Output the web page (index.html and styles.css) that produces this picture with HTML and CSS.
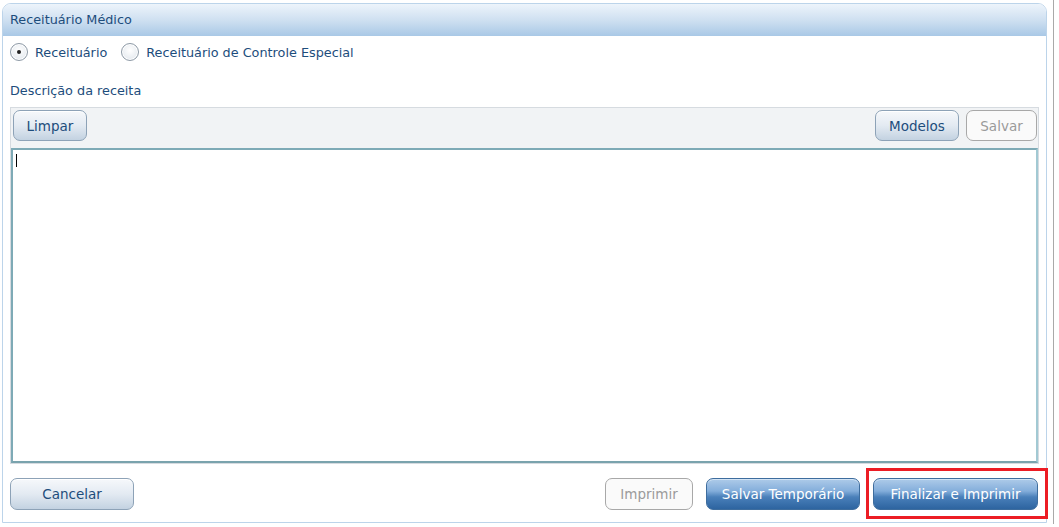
FILE: index.html
```html
<!doctype html>
<html lang="pt-BR">
<head>
	<meta charset="UTF-8">
	<title>Receituário Médico</title>
	<link rel="stylesheet" href="styles.css">
</head>
<body>
	<div class="page">
		<div class="panel">
			<div class="panel-head">Receituário Médico</div>
			<div class="panel-body">
				<div class="tipos">
					<label class="radio"><span class="dot checked"></span>Receituário</label>
					<label class="radio"><span class="dot"></span>Receituário de Controle Especial</label>
				</div>
				<div class="rotulo">Descrição da receita</div>
				<div class="editor">
					<div class="toolbar">
						<button class="btn b-limpar">Limpar</button>
						<span class="espaco"></span>
						<button class="btn b-modelos">Modelos</button>
						<button class="btn off b-salvar">Salvar</button>
					</div>
					<div class="texto"><span class="cursor"></span></div>
				</div>
				<div class="rodape">
					<button class="btn b-cancelar">Cancelar</button>
					<span class="espaco"></span>
					<button class="btn off b-imprimir">Imprimir</button>
					<button class="btn azul b-temp">Salvar Temporário</button>
					<span class="destaque"><button class="btn azul b-final">Finalizar e Imprimir</button></span>
				</div>
			</div>
		</div>
		<div class="borda"></div>
	</div>
</body>
</html>
```

FILE: styles.css
```css
* { margin: 0; padding: 0; box-sizing: border-box; }
body { background: #fff; font-family: "DejaVu Sans", Verdana, sans-serif; font-size: 12.8px; color: #1d4d7c; }
.page { display: flex; padding: 3px 0 0 2px; height: 527px; }
.panel { width: 1045px; height: 520px; border: 1px solid #bcd4ea; border-radius: 9px 9px 0 0; display: flex; flex-direction: column; }
.panel-head { height: 32px; padding: 8px 0 0 7px; border-radius: 8px 8px 0 0; background: linear-gradient(#edf4fb, #cfe0f1 50%, #a9c8e6); color: #1d4d7c; }
.panel-body { flex: 1; padding: 0 7px 0 7px; display: flex; flex-direction: column; }

.tipos { display: flex; gap: 14px; padding-top: 7px; height: 38px; }
.radio { display: flex; align-items: center; gap: 7px; height: 18px; color: #1d4d7c; }
.dot { width: 18px; height: 18px; border-radius: 50%; border: 1px solid #8e9aa6; background: radial-gradient(circle at 50% 40%, #fff, #dde3ea); position: relative; box-shadow: inset 0 0 0 1px #fff; }
.dot.checked::after { content: ""; position: absolute; left: 6px; top: 6px; width: 4px; height: 4px; border-radius: 50%; background: #222; }
.rotulo { height: 33px; padding-top: 9px; }

.editor { border: 1px solid #d6dbe0; background: #f1f3f5; height: 357px; display: flex; flex-direction: column; }
.toolbar { display: flex; gap: 7px; padding: 2px 1px 0 2px; height: 40px; }
.espaco { flex: 1; }
.texto { flex: 1; border: 2px solid #7eaab6; border-right-color: #a2c9d3; border-bottom-color: #7aa3ad; background: #fff; padding: 4px 0 0 3px; }
.cursor { display: block; width: 1px; height: 13px; background: #000; }

.btn { font-family: "DejaVu Sans", Verdana, sans-serif; font-size: 13.5px; color: #1d4d7c; height: 32px; padding: 0; border: 1px solid #8da2b7; border-radius: 7px; background: linear-gradient(#f6f8fb, #e3eaf2 50%, #c3d2e1); box-shadow: inset 0 1px 0 #fff; cursor: pointer; }
.toolbar .btn { height: 31px; }
.btn.off { color: #9a9a9a; background: #fafafa; border-color: #a8a8a8; box-shadow: none; }
.btn.azul { color: #fff; border-color: #3e6d9e; background: linear-gradient(#aecbe9, #84aedb 40%, #4a80ba 60%, #2d64a0); box-shadow: inset 0 1px 0 #d3e4f5; }
.b-limpar { width: 74px; }
.b-modelos { width: 84px; }
.b-salvar { width: 71px; }
.b-cancelar { width: 124px; }
.b-imprimir { width: 88px; }
.b-temp { width: 154px; }
.b-final { width: 165px; }

.rodape { display: flex; align-items: center; gap: 13px; padding: 14px 1px 0 0; }
.destaque { position: relative; display: flex; }
.destaque::after { content: ""; position: absolute; left: -7px; top: -10px; right: -10px; bottom: -9px; border: 3px solid #ec1c24; pointer-events: none; }

.borda { width: 1px; height: 524px; margin-left: 6px; margin-top: -3px; background: #a9a9a9; }
```
